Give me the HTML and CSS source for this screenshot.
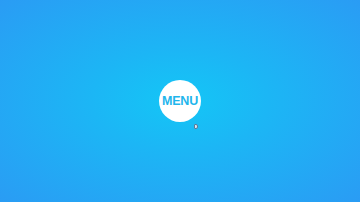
FILE: index.html
```html
<!DOCTYPE html>
<html lang="en">
  <head>
    <meta charset="UTF-8" />
    <meta name="viewport" content="width=device-width, initial-scale=1.0" />
    <title>Menu</title>
    <link rel="stylesheet" href="styles.css">
  </head>
  <body>
    <div class="stage">
      <button class="menu-btn">MENU</button>
      <span class="cursor"></span>
    </div>
  </body>
</html>
```

FILE: styles.css
```css
* {
  margin: 0;
  padding: 0;
  box-sizing: border-box;
  font-family: "Liberation Sans", Arial, sans-serif;
}
body {
  width: 360px;
  height: 202px;
  overflow: hidden;
  background: radial-gradient(ellipse at 50% 50%, #14c6f6 0%, #1cb6f5 35%, #2a9cf4 100%);
}
.stage {
  position: relative;
  height: 100%;
  display: flex;
  align-items: center;
  justify-content: center;
}
.menu-btn {
  width: 42px;
  height: 42px;
  border: none;
  outline: none;
  border-radius: 50%;
  background: #fff;
  color: #1fb6ec;
  font-weight: bold;
  font-size: 12.5px;
  letter-spacing: -0.2px;
  cursor: pointer;
}
.cursor {
  position: absolute;
  left: 194px;
  top: 124px;
  width: 4px;
  height: 5px;
  background: #d8e4ee;
  border: 1px solid #5a7a99;
  border-radius: 1px 2px 2px 1px;
}
```
